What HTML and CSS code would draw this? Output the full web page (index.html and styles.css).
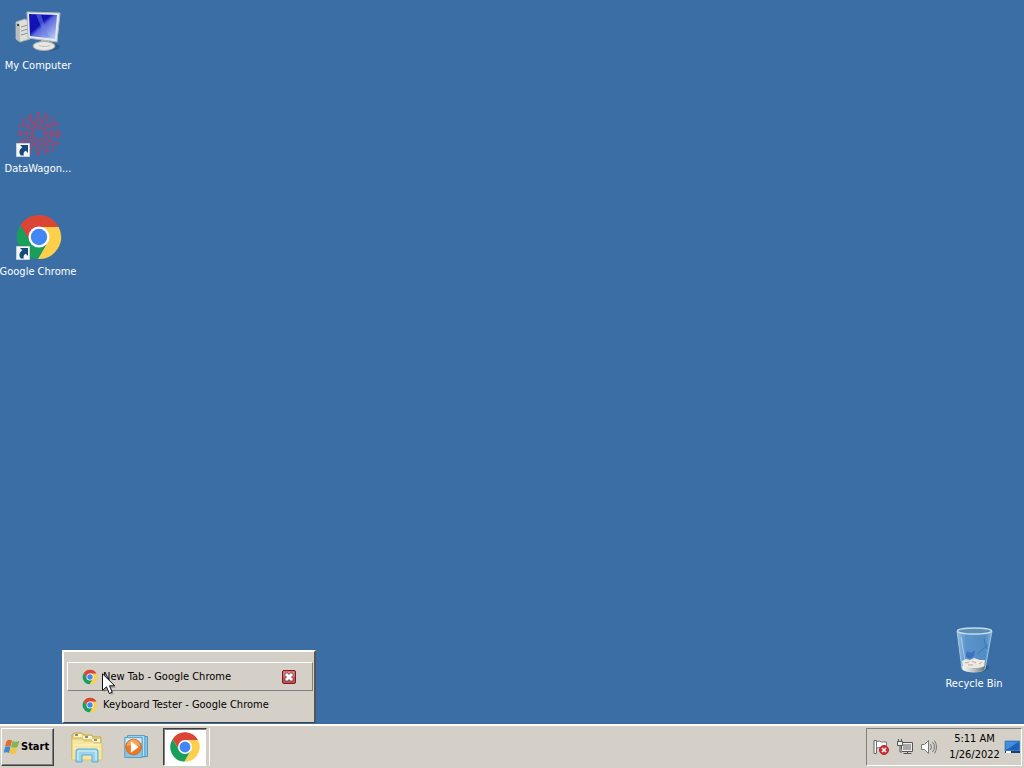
FILE: index.html
```html
<!DOCTYPE html>
<html lang="en">
<head>
<meta charset="utf-8">
<title>Desktop</title>
<link rel="stylesheet" href="styles.css">
</head>
<body>
<svg class="defs" aria-hidden="true">
  <symbol id="chrome" viewBox="0 0 48 48">
    <path fill="#dc4436" d="M24 14H43.6A22 22 0 0 0 5.5 12L15.3 29z"/>
    <path fill="#fdd04b" d="M43.6 14A22 22 0 0 1 22.9 46L32.7 29L24 24V14z"/>
    <path fill="#1a9f5a" d="M22.9 46A22 22 0 0 1 5.5 12L15.3 29H32.7z"/>
    <circle cx="24" cy="24" r="10.5" fill="#fff"/>
    <circle cx="24" cy="24" r="8.2" fill="#4286f4"/>
  </symbol>
  <symbol id="shortcut" viewBox="0 0 14 14">
    <path fill="#f4f6f8" stroke="#c5d2de" d="M.5.5h13v13H.5z"/>
    <path fill="#164a7b" d="M4 2H12v8L9.800 7.800C7.800 8.800 7.200 10 7.800 12.500H5C2.500 10 3 6.800 6.300 4.300z"/>
  </symbol>
  <linearGradient id="screen" x1="0" y1="0" x2="1" y2="1"><stop offset="0" stop-color="#1717b8"/><stop offset=".4" stop-color="#1010b4"/><stop offset=".5" stop-color="#5968dc"/><stop offset="1" stop-color="#c4d7fa"/></linearGradient>
  <linearGradient id="glass"><stop offset="0" stop-color="#b9dcf2" stop-opacity=".75"/><stop offset=".25" stop-color="#68a6da" stop-opacity=".7"/><stop offset=".8" stop-color="#5b98d0" stop-opacity=".7"/><stop offset="1" stop-color="#a4cee9" stop-opacity=".7"/></linearGradient>
  <linearGradient id="silver"><stop offset="0" stop-color="#f7f7f4"/><stop offset=".5" stop-color="#c3c6c8"/><stop offset="1" stop-color="#686f74"/></linearGradient>
</svg>

<main class="desktop">
  <a href="#computer" class="shortcut computer">
    <svg class="art" viewBox="0 0 48 48">
      <path fill="#dedfd9" stroke="#a9aeae" d="M1 14L10 11L15 14V31L5 34L1 31z"/>
      <path fill="#b8bdbd" d="M1 14l4 2v18l-4-3z"/><path d="M6 19l7-2M6 23l7-2M6 27l7-2" stroke="#8c9292"/><circle cx="3" cy="17" r="1" fill="#222"/>
      <ellipse cx="32" cy="39" rx="13" ry="4" fill="#203a58" opacity=".4"/>
      <path fill="#b9bcbc" d="M26 31l8 2v6h-8z"/>
      <ellipse cx="29" cy="38" rx="11" ry="4.500" fill="#e8e8e3" stroke="#a6abad"/><path d="M24 37c3 2 8 2 11 0" fill="none" stroke="#b8bdbe"/>
      <path fill="#e4e9ee" stroke="#aab7c3" d="M12 4L45 5L42 34L13 30z"/>
      <path fill="url(#screen)" d="M14 6L42 7L40 31L15 28z"/>
      <path fill="#6a83e8" opacity=".5" d="M21 6.500L26 7L34 29L30 28z"/>
    </svg>
    <span>My Computer</span>
  </a>
  <a href="#datawagon" class="shortcut wagon">
    <svg class="art" viewBox="0 0 48 48">
      <g fill="none" stroke="#b93f65" opacity=".85" stroke-width="1.500">
        <circle cx="24" cy="24" r="6" stroke-dasharray="3 1"/><circle cx="24" cy="24" r="9" stroke-dasharray="2 2"/>
        <circle cx="24" cy="24" r="12" stroke-dasharray="5 2"/><circle cx="24" cy="24" r="15" stroke-dasharray="3 3"/>
        <circle cx="24" cy="24" r="18" stroke-dasharray="5 4"/><circle cx="24" cy="24" r="21" stroke-dasharray="3 5"/>
        <path stroke-dasharray="4 2" d="M24 3l-4 14M31 4l-6 14M14 6l8 13M41 12L28 20M45 22l-16 1M42 35l-13-8M34 42l-7-13M24 45V30M14 41l7-12M5 33l14-6M3 22l15 2M7 11l12 10"/>
      </g>
    </svg>
    <svg class="badge" viewBox="0 0 14 14"><use href="#shortcut"/></svg>
    <span>DataWagon...</span>
  </a>
  <a href="#chrome-app" class="shortcut browser">
    <svg class="art" viewBox="0 0 48 48"><use href="#chrome"/></svg>
    <svg class="badge" viewBox="0 0 14 14"><use href="#shortcut"/></svg>
    <span>Google Chrome</span>
  </a>
  <a href="#bin" class="shortcut bin">
    <svg class="art" viewBox="0 0 48 48">
      <path d="M33 42l5-3 1 3-6 4z" fill="#1b3858" opacity=".4"/>
      <path fill="url(#glass)" stroke="#9cc6e6" d="M7 5L12 43C16 47 32 47 35 43L42 5z"/>
      <path fill="#eee9df" d="M12 35l4-2 4 1 4-2 6 2 5 0-1 8H13z"/><path d="M15 37l4-1M22 35l4 2M29 38l3-2M18 39h5" stroke="#b9aea3"/>
      <path fill="url(#silver)" d="M12 40c6 3 17 3 23 0l-1 4c-5 3-16 3-21 0z"/>
      <path fill="#315fbd" opacity=".65" d="M17 25l4 2 4-3-1 6-4 3-4-2z"/>
      <path stroke="#3168a8" opacity=".6" fill="none" d="M38 19L27 28M34 13l3 10M16 28l5 4"/>
      <path stroke="#d0eafa" opacity=".6" d="M11 11l4 24"/>
      <ellipse cx="24.500" cy="5" rx="17" ry="3" fill="#5d8db7" stroke="#c3dbe8" stroke-width="1.500"/>
    </svg>
    <span>Recycle Bin</span>
  </a>

  <section class="preview" aria-label="Chrome windows">
    <div class="window-row active">
      <button class="window-name"><svg viewBox="0 0 48 48"><use href="#chrome"/></svg>New Tab - Google Chrome</button>
      <button class="close" aria-label="Close"><svg viewBox="0 0 14 14"><rect x=".5" y=".5" width="13" height="13" rx="1.500" fill="#c75358" stroke="#7b1720"/><path d="M1.500 1.500h11v5h-11z" fill="#df9292"/><path d="M3 3h3l1 1.500L8 3h3v2.500L9.500 7 11 8.500V11H8L7 9.500 6 11H3V8.500L4.500 7 3 5.500z" fill="#fff" stroke="#5d2228" stroke-width=".7"/></svg></button>
    </div>
    <div class="window-row">
      <button class="window-name"><svg viewBox="0 0 48 48"><use href="#chrome"/></svg>Keyboard Tester - Google Chrome</button>
    </div>
  </section>
  <svg class="cursor" viewBox="0 0 14 22" aria-hidden="true"><path d="M2 3v16l4-3 3 6 3-1-3-6h5z" fill="#555" opacity=".35"/><path d="M.5.800V17.500L4.500 13.800L7.300 20.500L10.200 19.200L7.500 12.800H12.800z" fill="#fff" stroke="#111"/></svg>
</main>

<footer class="taskbar">
  <button class="start">
    <svg viewBox="0 0 16 16"><path fill="#e46a35" d="M2.500 2c2-1.500 3.500-1.500 5.500-.5L6.500 7.500c-2-1-3.500-1-5.500 0z"/><path fill="#83b650" d="M8.500 2c2 1 4.500 1 7 0L13.500 8c-2 1-4.500 1-6.500 0z"/><path fill="#4389cb" d="M1 8c2-1 3.500-1 5.500 0L5 14c-2-1-3.500-1-5.500 0z"/><path fill="#f4c640" d="M7 8.500c2 1 4 1 6.500 0l-2 6c-2 1-4 1-6 0z"/></svg>Start
  </button>
  <nav class="apps" aria-label="Applications">
    <button class="app" aria-label="Explorer"><svg viewBox="0 0 32 32">
      <path d="M1 4l2-2h8l2 2h8l1 2h8v22H1z" fill="#e7ce75" stroke="#c9a947"/><path d="M3 3h8v3H3zM12 5h9v3h-9zM21 8h8v3h-8z" fill="#faf3cc"/><path d="M4 4h3M14 6h3M23 9h3" stroke="#56746b" stroke-width="1.500"/>
      <path d="M1 8h10l2 2h8l2 2h8v17H1z" fill="#f5e7a2" stroke="#ddc36c"/><path d="M2 14h28M2 18h28" stroke="#fff4be"/>
      <path d="M5 31V20q0-2 2-2h18q2 0 2 2v11h-6v-7H11v7z" fill="#9bd3ee" stroke="#5aaad3"/><path d="M7 29v-9h18v9" fill="none" stroke="#d9f4ff"/>
    </svg></button>
    <button class="app" aria-label="Media player"><svg viewBox="0 0 32 32">
      <path d="M8 4h20v23H8z" fill="#8fc9e9" stroke="#438fbd"/><path d="M5 3h20v24H5z" fill="#b9e0f2" stroke="#438fbd"/><path d="M2 5h20v23H2z" fill="#8ac5e6" stroke="#4c9ac5"/><path d="M3 6h18v5L3 20z" fill="#d1edf8"/>
      <circle cx="12" cy="16" r="9" fill="#ed7822" stroke="#cf681f"/><path d="M4.500 15a7.500 7.500 0 0 1 15 0q-7-4-15 0" fill="#f7a55b"/><path d="M9 9.500l9 6.500-9 6.500z" fill="#fff"/>
    </svg></button>
    <button class="app selected" aria-label="Google Chrome"><svg viewBox="0 0 48 48"><use href="#chrome"/></svg></button>
  </nav>
  <div class="tray">
    <button class="tray-icon" aria-label="Action Center"><svg viewBox="0 0 16 16"><path d="M1 1.500h2.500v13H1z" fill="#fff" stroke="#666"/><path d="M3.500 2.500q3-1 5 .5h5v6H8q-2-1-4.500 0z" fill="#fff" stroke="#777"/><circle cx="11" cy="11" r="4.500" fill="#d62e34" stroke="#a92830"/><path d="M9 9l4 4m0-4l-4 4" stroke="#fff" stroke-width="1.500"/></svg></button>
    <button class="tray-icon" aria-label="Network"><svg viewBox="0 0 16 16"><path fill="#eee" stroke="#555" d="M4.500 3.500h11v9h-11zM6.500 14.500h8M10.500 12v2"/><path d="M6 5h8v6H6z" fill="#a8a9a7"/><path fill="#eee" stroke="#555" d="M.5 2.500h5v4h-5zM1.500 0v2M4.500 0v2M3 7v6h2"/></svg></button>
    <button class="tray-icon" aria-label="Volume"><svg viewBox="0 0 16 16"><path d="M.5 5.500h3l4-4v13l-4-4h-3z" fill="#fff" stroke="#777"/><path d="M9.500 5q2 3 0 6M11.500 3q4 5 0 10M13.500 1.500q4 6.500 0 13" fill="none" stroke="#777"/></svg></button>
    <button class="clock"><time datetime="2022-01-26T05:11">5:11 AM<br>1/26/2022</time></button>
    <button class="show" aria-label="Show desktop"><svg viewBox="0 0 16 14"><path d="M1 1h15v10H1z" fill="#1d61bb" stroke="#5d91c7"/><path d="M2 2h12L4 9H2z" fill="#4190df"/><path d="M1 12h15" stroke="#163f78" stroke-width="2"/><path d="M2 12h5" stroke="#fff" stroke-width="2"/></svg></button>
  </div>
</footer>
</body>
</html>
```
FILE: styles.css
```css
* { box-sizing: border-box; }
body {
  margin: 0;
  min-height: 100vh;
  display: flex;
  flex-direction: column;
  background: #3a6ea5;
  font: 11px/16px "DejaVu Sans Condensed", "DejaVu Sans", sans-serif;
  color: #000;
}
button { font: inherit; color: inherit; border: 0; background: none; padding: 0; }
svg { display: block; flex-shrink: 0; }
.defs { position: absolute; width: 0; height: 0; }
.desktop { position: relative; flex: 1; }
.shortcut {
  position: absolute;
  width: 76px;
  display: flex;
  flex-direction: column;
  align-items: center;
  color: #fff;
  text-decoration: none;
  white-space: nowrap;
}
.shortcut .art { width: 48px; height: 48px; margin-bottom: 2px; }
.shortcut .badge { position: absolute; left: 16px; top: 33px; width: 14px; height: 14px; }
.computer { left: 0; top: 8px; }
.wagon { left: 0; top: 110px; }
.browser { left: 0; top: 213px; }
.computer .art, .wagon .art, .browser .art { margin-left: 2px; }
.wagon .art, .browser .art { margin-bottom: 3px; }
.bin { right: 12px; bottom: 32px; }
.preview {
  position: absolute;
  left: 62px;
  bottom: 1px;
  width: 254px;
  padding: 10px 1px 4px 3px;
  background: #d4d0c8;
  border: 1px solid #404040;
  border-top: 2px solid #fff;
  border-left: 2px solid #fff;
  border-right: 2px solid #555;
}
.window-row {
  display: flex;
  align-items: center;
  justify-content: space-between;
  height: 27px;
  padding: 0 16px 0 14px;
  border: 1px solid transparent;
}
.window-row.active { height: 29px; border-color: #fff #808080 #808080 #fff; }
.window-name { display: flex; align-items: center; gap: 5px; white-space: nowrap; }
.window-name svg { width: 16px; height: 16px; }
.close svg { width: 14px; height: 14px; }
.cursor { position: absolute; left: 102px; bottom: 29px; width: 14px; height: 22px; }
.taskbar {
  display: flex;
  align-items: stretch;
  height: 44px;
  padding: 2px 2px 2px 1px;
  background: #d4d0c8;
  border-top: 2px solid #fff;
}
.start {
  display: flex;
  align-items: center;
  gap: 1px;
  width: 53px;
  padding: 0 2px;
  font-weight: bold;
  border: 1px solid;
  border-color: #fff #404040 #404040 #fff;
  box-shadow: inset -1px -1px #808080;
}
.start svg { width: 16px; height: 16px; }
.apps { display: flex; flex: 1; margin-left: 8px; }
.app { display: flex; align-items: center; justify-content: center; width: 50px; }
.app svg { width: 32px; height: 32px; }
.app:nth-child(2) svg { width: 28px; height: 28px; }
.selected {
  width: 44px;
  background: #fff;
  border: 1px solid;
  border-color: #404040 #d4d0c8 #fff #404040;
  box-shadow: inset 1px 1px #808080, 2px 0 #d4d0c8, 3px 0 #fff;
}
.app.selected { margin-left: 1px; }
.tray {
  display: flex;
  align-items: center;
  gap: 8px;
  padding: 0 1px 0 6px;
  border: 1px solid;
  border-color: #808080 #fff #fff #808080;
}
.tray-icon svg, .show svg { width: 16px; height: 16px; }
.clock { width: 59px; text-align: center; }
.show { margin-left: -8px; }
```
